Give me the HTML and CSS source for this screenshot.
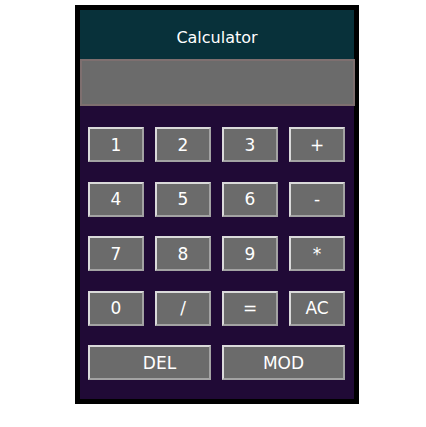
FILE: index.html
```html
<!DOCTYPE html>
<html>
<head>
<meta charset="utf-8">
<title>Calculator</title>
<link rel="stylesheet" href="styles.css">
</head>
<body>
<div class="calc">
  <div class="header">Calculator</div>
  <div class="display"></div>
  <div class="keys">
    <button class="key">1</button>
    <button class="key">2</button>
    <button class="key">3</button>
    <button class="key">+</button>
    <button class="key">4</button>
    <button class="key">5</button>
    <button class="key">6</button>
    <button class="key">-</button>
    <button class="key">7</button>
    <button class="key">8</button>
    <button class="key">9</button>
    <button class="key">*</button>
    <button class="key">0</button>
    <button class="key">/</button>
    <button class="key">=</button>
    <button class="key">AC</button>
    <button class="key wide del">DEL</button>
    <button class="key wide">MOD</button>
  </div>
</div>
</body>
</html>
```

FILE: styles.css
```css
html, body {
  margin: 0;
  padding: 0;
  background: #ffffff;
}

body {
  padding: 5px 0 0 75px;
  font-family: "DejaVu Sans", Verdana, sans-serif;
}

.calc {
  width: 274px;
  border: 5px solid #000000;
  background: #200a36;
}

.header {
  height: 49px;
  background: #08313a;
  color: #ffffff;
  font-size: 16px;
  display: flex;
  align-items: center;
  justify-content: center;
  padding-top: 5px;
  box-sizing: border-box;
}

.display {
  height: 47px;
  width: 275px;
  box-sizing: border-box;
  background: #6b6b6b;
  border: 2px solid #7e6f6f;
}

.keys {
  display: grid;
  grid-template-columns: repeat(4, 56px);
  grid-auto-rows: 35px;
  column-gap: 11px;
  row-gap: 19.5px;
  padding: 21px 9px 19px 8px;
}

.key {
  margin: 0;
  padding: 0;
  background: #6b6b6b;
  color: #ffffff;
  font-family: "DejaVu Sans", Verdana, sans-serif;
  font-size: 17px;
  border: 2px solid;
  border-color: #dadada #a3a3a3 #a3a3a3 #dadada;
  display: flex;
  align-items: center;
  justify-content: center;
}

.wide {
  grid-column: span 2;
}

.del {
  padding-left: 20px;
}
```
